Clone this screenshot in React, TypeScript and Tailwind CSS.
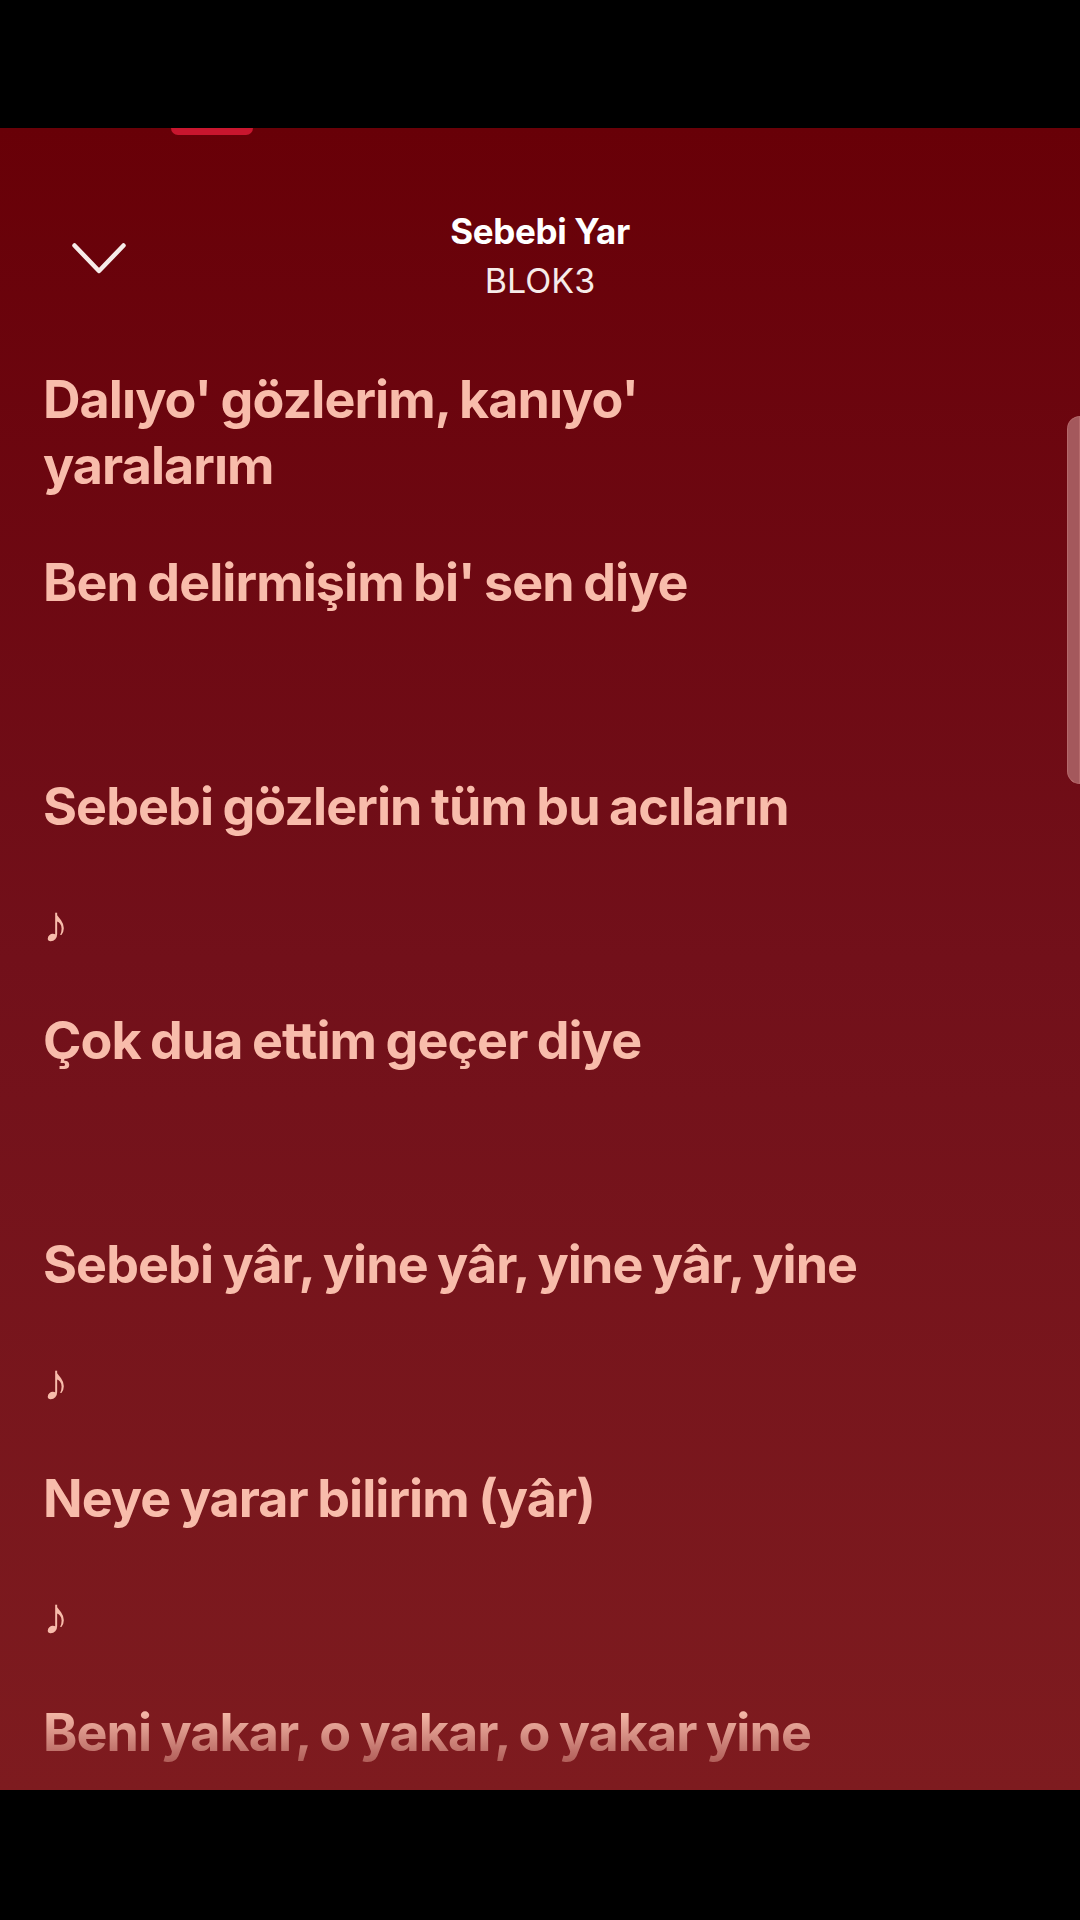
const lines: string[] = [
  "Dalıyo' gözlerim, kanıyo' yaralarım",
  "Ben delirmişim bi' sen diye",
  "",
  "Sebebi gözlerin tüm bu acıların",
  "♪",
  "Çok dua ettim geçer diye",
  "",
  "Sebebi yâr, yine yâr, yine yâr, yine",
  "♪",
  "Neye yarar bilirim (yâr)",
  "♪",
  "Beni yakar, o yakar, o yakar yine",
]

const ChevronDown = () => (
  <svg width="54" height="31" viewBox="0 0 54 31" fill="none">
    <polyline points="2.5,2.5 27,28 51.5,2.5" stroke="#f7ece9" strokeWidth="4.5" strokeLinecap="round" strokeLinejoin="round" />
  </svg>
)

const App = () => {
  return (
    <div className="w-[1080px] h-[1920px] bg-black flex flex-col font-['Inter','Noto_Sans',sans-serif]">
      <div className="h-[128px] shrink-0 bg-black" />
      <main className="relative h-[1662px] shrink-0 overflow-hidden bg-gradient-to-b from-[#680007] via-[#72101a] to-[#7e1b1f]">
        <div className="absolute top-0 left-[171px] w-[82px] h-[7px] rounded-b-full bg-[#c8162e]" />

        <header className="grid grid-cols-[1fr_auto_1fr] pt-[83px]">
          <div className="pl-[72px] pt-[32px]">
            <ChevronDown />
          </div>
          <div className="flex flex-col items-center">
            <span className="text-[35px] leading-[40px] font-bold text-white tracking-[-0.01em]">Sebebi Yar</span>
            <span className="mt-[10px] text-[34px] leading-[40px] text-[#f6ece9]">BLOK3</span>
          </div>
          <div />
        </header>

        <section className="flex flex-col gap-[51px] pl-[43px] pt-[66px] max-w-[866px]">
          {lines.map((line, i) =>
            line === "" ? (
              <div key={i} className="h-[56px]" />
            ) : (
              <p key={i} className="text-[52px] leading-[66px] font-bold text-[#f8bcab] tracking-[-0.018em] [word-spacing:-2px]">
                {line}
              </p>
            )
          )}
        </section>

        <div className="absolute bottom-0 left-0 right-0 h-[80px] bg-gradient-to-b from-[#7e1b1f]/0 to-[#7e1b1f]/90" />
        <div className="absolute top-[288px] right-0 w-[13px] h-[368px] rounded-l-full bg-[#a4585c] border border-[#b56a6c]" />
      </main>
      <div className="flex-1 bg-black" />
    </div>
  )
}

export default App
